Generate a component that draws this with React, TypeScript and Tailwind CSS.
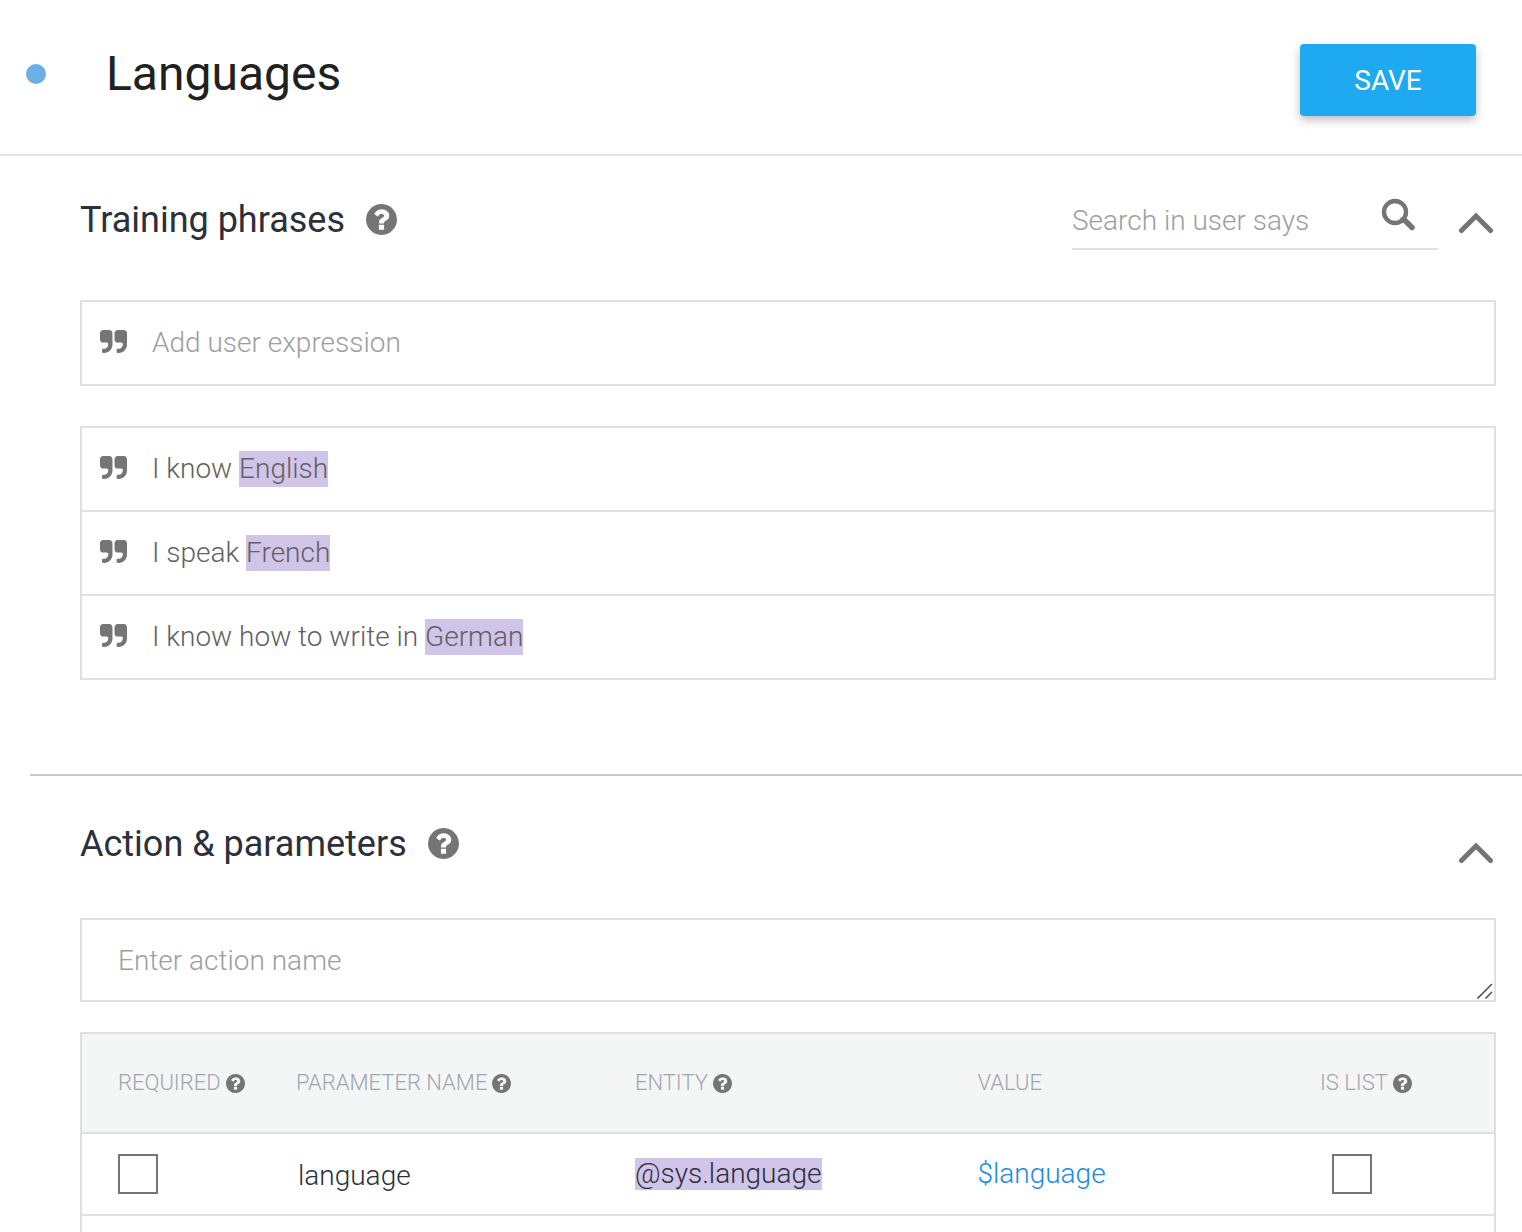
import type { ReactNode } from "react";

const phrases = [
  { text: "I know", entity: "English" },
  { text: "I speak", entity: "French" },
  { text: "I know how to write in", entity: "German" },
];

const parameters = [{ name: "language", entity: "@sys.language", value: "$language" }];

function HelpIcon({ className }: { className?: string }) {
  return (
    <svg viewBox="128 128 1536 1536" className={className} fill="currentColor" aria-hidden="true">
      <path d="M1024 1376v-192q0-14-9-23t-23-9h-192q-14 0-23 9t-9 23v192q0 14 9 23t23 9h192q14 0 23-9t9-23zm256-672q0-88-55.5-163t-138.5-116-170-41q-243 0-371 213-15 24 8 42l132 100q7 6 19 6 16 0 25-12 53-68 86-92 34-24 86-24 48 0 85.5 26t37.500 59q0 38-20 61t-68 45q-63 28-115.500 86.500t-52.500 125.500v36q0 14 9 23t23 9h192q14 0 23-9t9-23q0-19 21.500-49.500t54.500-49.500q32-18 49-28.500t46-35 44.500-48 28-60.500 12.500-81zm384 192q0 209-103 385.500t-279.500 279.500-385.500 103-385.500-103-279.500-279.500-103-385.500 103-385.500 279.500-279.500 385.500-103 385.500 103 279.500 279.500 103 385.500z" />
    </svg>
  );
}

function QuoteIcon() {
  const mark =
    "M768 192v704q0 104-40.500 198.500t-109.500 163.500-163.500 109.500-198.500 40.500h-64q-26 0-45-19t-19-45v-128q0-26 19-45t45-19h64q106 0 181-75t75-181v-32q0-40-28-68t-68-28h-224q-80 0-136-56t-56-136v-384q0-80 56-136t136-56h384q80 0 136 56t56 136z";
  return (
    <svg viewBox="0 0 1664 1408" className="mb-1 h-[23px] w-[27px] shrink-0 text-[#757575]" fill="currentColor" aria-hidden="true">
      <path d={mark} />
      <path d={mark} transform="translate(896 0)" />
    </svg>
  );
}

function SearchIcon() {
  return (
    <svg viewBox="0 0 34 34" className="size-[34px] text-[#757575]" fill="none" stroke="currentColor" aria-hidden="true">
      <circle cx="14" cy="14" r="11" strokeWidth="4.4" />
      <path d="M21.500 22L24 22.500L31 29.500" strokeWidth="5.4" strokeLinecap="round" strokeLinejoin="round" />
    </svg>
  );
}

function CollapseButton({ label }: { label: string }) {
  return (
    <button type="button" aria-label={label} className="text-[#757575]">
      <svg viewBox="0 0 36 22" className="h-[22px] w-9" fill="none" stroke="currentColor" strokeWidth="5" strokeLinecap="round" aria-hidden="true">
        <path d="M3.500 18.500L18 4L32.500 18.500" strokeLinejoin="miter" />
      </svg>
    </button>
  );
}

function SectionTitle({ children }: { children: ReactNode }) {
  return (
    <h2 className="flex items-center gap-[21px] text-[36px] leading-[42px] text-[#2b303b]">
      <span className="pt-0.5">{children}</span>
      <HelpIcon className="size-[31px] text-[#757575]" />
    </h2>
  );
}

function ColumnHead({ children, help = true, className = "" }: { children: ReactNode; help?: boolean; className?: string }) {
  return (
    <th scope="col" className={`text-left font-light ${className}`}>
      <span className="flex items-center gap-[5px]">
        {children}
        {help && <HelpIcon className="size-[19px] text-[#757575]" />}
      </span>
    </th>
  );
}

function Checkbox({ label }: { label: string }) {
  return (
    <input
      type="checkbox"
      aria-label={label}
      className="block size-10 appearance-none border-2 border-[#757575] bg-white checked:bg-[#757575]"
    />
  );
}

export default function App() {
  return (
    <div className="h-screen overflow-hidden bg-white font-['Roboto',sans-serif] text-[28px] leading-9 font-light">
      <header className="flex h-[156px] items-start justify-between border-b-2 border-[#e5e5e5] pt-11 pr-[46px] pl-[26px]">
        <div className="flex items-center gap-[60px]">
          <span className="size-5 rounded-full bg-[#6aafe6]" />
          <h1 className="text-5xl leading-[60px] font-normal text-[#212121]">Languages</h1>
        </div>
        <button type="button" className="h-[72px] w-44 rounded bg-[#1ea9f1] pt-0.5 font-normal text-white shadow-[0_4px_10px_rgba(0,0,0,0.26)]">
          SAVE
        </button>
      </header>

      <main>
        <section className="pt-8 pr-[26px] pb-[94px] pl-20">
          <div className="mb-[50px] flex h-[62px] items-center justify-between pr-0.5 font-normal">
            <SectionTitle>Training phrases</SectionTitle>
            <div className="flex items-center gap-5">
              <label className="flex h-[62px] w-[366px] items-center border-b-2 border-[#e0e0e0] pr-[23px] font-light">
                <input
                  type="text"
                  aria-label="Search in user says"
                  placeholder="Search in user says"
                  className="min-w-0 flex-1 pt-1.5 outline-none placeholder:text-[#9e9e9e]"
                />
                <span className="pb-1.5">
                  <SearchIcon />
                </span>
              </label>
              <div className="flex pt-2">
                <CollapseButton label="Collapse training phrases" />
              </div>
            </div>
          </div>

          <label className="mb-10 flex h-[86px] items-center gap-[25px] border-2 border-[#e0e0e0] pl-[18px]">
            <QuoteIcon />
            <input
              type="text"
              aria-label="Add user expression"
              placeholder="Add user expression"
              className="flex-1 outline-none placeholder:text-[#9e9e9e]"
            />
          </label>

          <ul className="divide-y-2 divide-[#e0e0e0] border-2 border-[#e0e0e0] text-[#616161]">
            {phrases.map((phrase) => (
              <li key={phrase.entity} className="flex h-[84px] items-center gap-[25px] pl-[18px] last:h-[82px]">
                <QuoteIcon />
                <span>
                  {phrase.text} <mark className="bg-[#d1c4e9] pt-px pb-0.5 text-inherit">{phrase.entity}</mark>
                </span>
              </li>
            ))}
          </ul>
        </section>

        <hr className="ml-[30px] border-t-2 border-[#ccc8c5]" />

        <section className="pt-9 pr-[26px] pl-20">
          <div className="mb-11 flex h-[62px] items-center justify-between pr-0.5 font-normal">
            <SectionTitle>Action &amp; parameters</SectionTitle>
            <div className="flex pt-5">
              <CollapseButton label="Collapse action and parameters" />
            </div>
          </div>

          <div className="relative mb-[30px]">
            <textarea
              rows={1}
              aria-label="Action name"
              placeholder="Enter action name"
              className="block h-[84px] w-full resize-none overflow-hidden border-2 border-[#e0e0e0] px-9 py-[23px] outline-none placeholder:text-[#9e9e9e]"
            />
            <svg viewBox="0 0 16 16" className="absolute right-[3px] bottom-[3px] size-4" stroke="#555" strokeWidth="1.6" aria-hidden="true">
              <path d="M0.500 15.500L15 1M8.500 15.500L15 9" />
            </svg>
          </div>

          <div className="border-2 border-[#e0e0e0]">
            <table className="w-full table-fixed border-separate border-spacing-0 text-[#2b303b]">
              <thead>
                <tr className="h-[100px] bg-[#f4f6f5] text-[22px] text-[#9fa4b1] *:border-b-2 *:border-[#e0e0e0]">
                  <ColumnHead className="w-[214px] pl-9">REQUIRED</ColumnHead>
                  <ColumnHead className="w-[24%]">PARAMETER NAME</ColumnHead>
                  <ColumnHead>ENTITY</ColumnHead>
                  <ColumnHead help={false}>VALUE</ColumnHead>
                  <ColumnHead className="w-[174px]">IS LIST</ColumnHead>
                </tr>
              </thead>
              <tbody>
                {parameters.map((param) => (
                  <tr key={param.name} className="h-[82px] *:border-b-2 *:border-[#e0e0e0]">
                    <td className="pl-9">
                      <Checkbox label={`${param.name} is required`} />
                    </td>
                    <td className="pt-1 pl-0.5">{param.name}</td>
                    <td>
                      <mark className="inline-block bg-[#d1c4e9] leading-8 text-inherit">{param.entity}</mark>
                    </td>
                    <td className="text-[#1a8be0]">{param.value}</td>
                    <td className="pl-3">
                      <Checkbox label={`${param.name} is list`} />
                    </td>
                  </tr>
                ))}
                <tr className="h-[82px]">
                  <td colSpan={5} />
                </tr>
              </tbody>
            </table>
          </div>
        </section>
      </main>
    </div>
  );
}
